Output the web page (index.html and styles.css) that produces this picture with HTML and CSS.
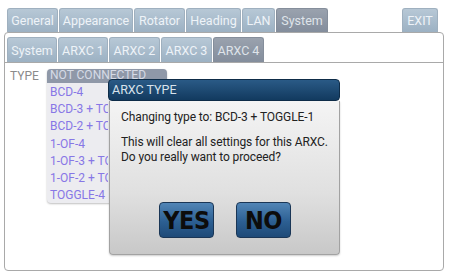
FILE: index.html
```html
<!DOCTYPE html>
<html>
<head>
<meta charset="utf-8">
<link rel="stylesheet" href="styles.css">
</head>
<body>
<div class="screen">
  <div class="tabbar">
    <div class="tab w-general">General</div>
    <div class="tab w-appearance">Appearance</div>
    <div class="tab w-rotator">Rotator</div>
    <div class="tab w-heading">Heading</div>
    <div class="tab w-lan">LAN</div>
    <div class="tab active w-system">System</div>
    <div class="spacer"></div>
    <div class="tab exit">EXIT</div>
  </div>
  <div class="panel">
    <div class="subbar">
      <div class="tab sub w-s1">System</div>
      <div class="tab sub w-s2">ARXC 1</div>
      <div class="tab sub w-s3">ARXC 2</div>
      <div class="tab sub w-s4">ARXC 3</div>
      <div class="tab sub active w-s5">ARXC 4</div>
    </div>
    <div class="content">
      <div class="type-label">TYPE</div>
    </div>
  </div>

  <div class="dropdown">
    <div class="dd-item selected">NOT CONNECTED</div>
    <div class="dd-item">BCD-4</div>
    <div class="dd-item">BCD-3 + TOGGLE-1</div>
    <div class="dd-item">BCD-2 + TOGGLE-2</div>
    <div class="dd-item">1-OF-4</div>
    <div class="dd-item">1-OF-3 + TOGGLE-1</div>
    <div class="dd-item">1-OF-2 + TOGGLE-2</div>
    <div class="dd-item">TOGGLE-4</div>
  </div>

  <div class="dialog">
    <div class="dlg-title">ARXC TYPE</div>
    <div class="dlg-body">
      <p class="line first">Changing type to: BCD-3 + TOGGLE-1</p>
      <p class="line">This will clear all settings for this ARXC.</p>
      <p class="line">Do you really want to proceed?</p>
      <div class="buttons">
        <div class="btn">YES</div>
        <div class="btn">NO</div>
      </div>
    </div>
  </div>
</div>
</body>
</html>
```

FILE: styles.css
```css
html, body {
  margin: 0;
  padding: 0;
  background: #ffffff;
}
body {
  font-family: Roboto, "Noto Sans", sans-serif;
  width: 449px;
  height: 275px;
  overflow: hidden;
}
.screen {
  position: relative;
  width: 449px;
  height: 275px;
  padding-top: 8px;
  box-sizing: border-box;
}
.tabbar {
  display: flex;
  height: 24px;
  padding: 0 11px 0 7px;
  gap: 1px;
  position: relative;
  z-index: 2;
}
.spacer { flex: 1; }
.tab {
  height: 100%;
  box-sizing: border-box;
  display: flex;
  align-items: center;
  justify-content: center;
  font-size: 12.5px;
  color: #eef3f8;
  background: linear-gradient(#b7c8d6, #9cb1c3);
  border-radius: 3px 3px 0 0;
  border: 1px solid #9fb0bf;
  border-bottom: none;
}
.tab.active {
  background: linear-gradient(#9aa2ae, #838d9c);
  border-color: #858e9b;
  color: #dfe4ea;
}
.w-general { width: 51px; }
.w-appearance { width: 74px; }
.w-rotator { width: 51px; }
.w-heading { width: 55px; }
.w-lan { width: 33px; }
.w-system { width: 52px; }
.tab.exit { width: 36px; }

.panel {
  margin: 0 5px 0 4px;
  height: 239px;
  box-sizing: border-box;
  border: 1px solid #a9a9a9;
  border-radius: 4px;
  padding-top: 4px;
}
.subbar {
  display: flex;
  height: 25px;
  padding-left: 2px;
  gap: 1px;
  border-bottom: 1px solid #a9a9a9;
}
.w-s1 { width: 50px; }
.w-s2 { width: 50px; }
.w-s3 { width: 51px; }
.w-s4 { width: 51px; }
.w-s5 { width: 51px; }
.content {
  padding: 6px 0 0 5px;
}
.type-label {
  font-size: 12px;
  color: #8b8b8b;
}

.dropdown {
  position: absolute;
  left: 47px;
  top: 69px;
  width: 120px;
  height: 134px;
  box-sizing: border-box;
  background: #ececf0;
  border-radius: 4px;
  box-shadow: 0 1px 2px rgba(0,0,0,0.25);
  overflow: hidden;
  z-index: 3;
}
.dd-item {
  height: 17.2px;
  line-height: 17px;
  padding-left: 3px;
  width: 58px;
  overflow: hidden;
  font-size: 12px;
  color: #8777e6;
  white-space: nowrap;
}
.dd-item.selected {
  width: auto;
  background: #8f98a8;
  color: #d6dbe6;
  height: 14px;
  line-height: 13px;
  margin-bottom: 1px;
}

.dialog {
  position: absolute;
  left: 108px;
  top: 79px;
  width: 232px;
  z-index: 4;
}
.dlg-title {
  height: 22px;
  box-sizing: border-box;
  background: linear-gradient(#2a5a86, #123a5f);
  border: 1px solid #0e2c48;
  border-radius: 4px;
  color: #d8e2ec;
  font-size: 12.5px;
  padding-left: 3px;
  line-height: 20px;
}
.dlg-body {
  height: 154px;
  box-sizing: border-box;
  margin-left: 1px;
  background: linear-gradient(#f4f4f4, #e0e0e0 60%, #c8c8c8);
  border: 1px solid #a2a2a2;
  border-top: none;
  border-radius: 0 0 4px 4px;
  padding: 9px 0 0 11px;
  box-shadow: 0 1px 2px rgba(0,0,0,0.2);
}
.line {
  margin: 0;
  font-size: 12px;
  letter-spacing: -0.1px;
  line-height: 15px;
  color: #222;
  white-space: nowrap;
}
.line.first { margin-bottom: 10px; }
.buttons {
  display: flex;
  gap: 22px;
  padding-left: 38px;
  margin-top: 37px;
}
.btn {
  width: 55px;
  height: 36px;
  box-sizing: border-box;
  background: linear-gradient(#5185b6, #2c5f92 55%, #1e4a78);
  border: 1px solid #1a3656;
  border-radius: 4px;
  display: flex;
  align-items: center;
  justify-content: center;
  font-family: "DejaVu Sans", sans-serif;
  font-weight: bold;
  font-stretch: condensed;
  font-size: 25px;
  letter-spacing: -0.5px;
  color: #0c0c0c;
}
```
